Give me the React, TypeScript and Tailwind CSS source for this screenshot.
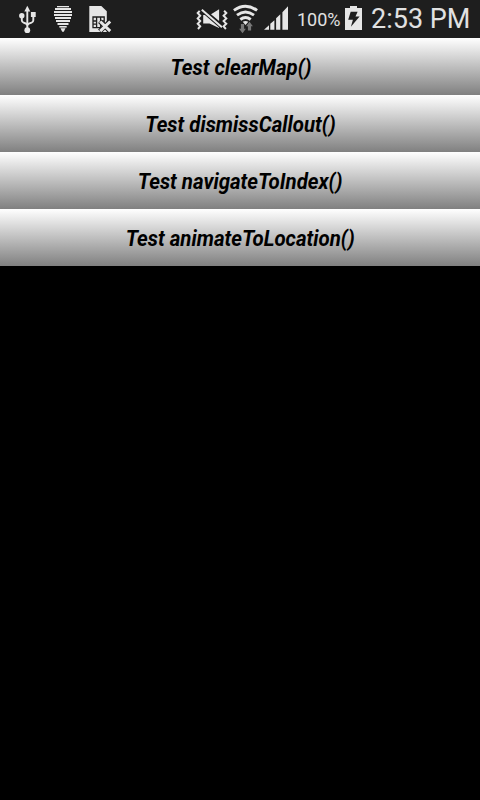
import type { ReactNode } from "react";

const ROBOTO = "font-['Roboto',sans-serif]";

function Glyph({ box, className, children }: { box: string; className: string; children: ReactNode }) {
  return (
    <svg viewBox={box} className={`block h-[38px] shrink-0 ${className}`} fill="#e6e6e6">
      {children}
    </svg>
  );
}

function UsbIcon() {
  return (
    <Glyph box="18 0 20 38" className="w-5">
      <path d="M27.3 5.8l3 5.6h-6z" />
      <circle cx="27.3" cy="30.2" r="2.9" />
      <circle cx="21.8" cy="15.8" r="2.7" />
      <rect x="30.9" y="12" width="4.8" height="5" />
      <path d="M27.3 10v20M21.8 16v4.2q0 1.8 1.8 2.5l2.1 .8q1.6.7 1.6 2.5M33.3 16v4.2q0 1.8-1.8 2.5l-2.6.9q-1.6.7-1.6 2.5" fill="none" stroke="#e6e6e6" strokeWidth="1.9" />
    </Glyph>
  );
}

function StripedPinIcon() {
  return (
    <Glyph box="53 0 20 38" className="w-5">
      <rect x="57" y="6" width="12" height="1.3" />
      <rect x="55" y="8" width="16" height="2" />
      <rect x="54" y="11" width="18" height="2" />
      <rect x="54" y="14" width="18" height="2" />
      <rect x="55" y="17" width="16" height="2" />
      <rect x="56" y="20" width="14" height="2" />
      <rect x="57.5" y="23" width="11" height="2" />
      <rect x="59.3" y="26" width="7.4" height="1.6" />
      <path d="M60.5 28.2h5l-1.7 3.6h-1.6z" />
    </Glyph>
  );
}

function SimIcon() {
  return (
    <Glyph box="88 0 24 38" className="w-6">
      <path d="M89.3 6h12l5.5 5.3V32H89.3z" />
      <path d="M93 17h11.2v10.6H93zM96.6 17v10.6M100.6 17v10.6M93 21h3.6M93 24.2h3.6M100.6 21h3.6" fill="none" stroke="#1e1e1e" strokeWidth="1.3" />
      <path d="M99.8 21.2l10.4 10M110.2 21.2l-10.4 10" stroke="#1e1e1e" strokeWidth="5" />
      <path d="M100.2 21.5l10 9.7M110.2 21.5l-10 9.7" stroke="#e6e6e6" strokeWidth="3" />
    </Glyph>
  );
}

function MuteIcon() {
  return (
    <Glyph box="195 0 34 38" className="w-[34px]">
      <path d="M203.2 15h2.6l13.3 11.4V28l-9.6-4.4h-6.3zM211 14.2l8.1-5V21z" />
      <path d="M201.8 9.8l20.2 17.4" stroke="#1e1e1e" strokeWidth="4" />
      <path d="M201.8 9.8l20.2 17.4" stroke="#e6e6e6" strokeWidth="2" />
      <path d="M199.7 10.8l-2 2.2 2.5 2.7-2.5 2.7 2.5 2.7-2.5 2.7 2.5 2.6-2.2 2.6M224.1 10.8l2.2 2.2-2.7 2.7 2.7 2.7-2.7 2.7 2.7 2.7-2.7 2.6 2.3 2.6" fill="none" stroke="#e6e6e6" strokeWidth="2" />
    </Glyph>
  );
}

function WifiIcon() {
  return (
    <Glyph box="232 0 28 38" className="w-7">
      <g fill="none" stroke="#e6e6e6" strokeWidth="2.9">
        <path d="M233.9 10.4q11.6-8.2 23.2 0" />
        <path d="M237 15.2q8.5-6.4 17 0" />
        <path d="M240.3 19.5q5.2-4 10.4 0" />
      </g>
      <path d="M242.7 21.8q2.8-1.8 5.6 0l-2.8 3.2z" />
      <path d="M249.5 21.7l3.4 4.6h-1.8v4.1h-3.2v-4.1h-1.8zM242.5 33.2l-3.4-4.4h1.8V24h3.2v4.8h1.8z" fill="#777" />
    </Glyph>
  );
}

function SignalIcon() {
  return (
    <Glyph box="263 0 26 38" className="w-[26px]">
      <path d="M264 29.8l5-4.6v4.6zM270.3 23.7l4.1-3.5v9.6h-4.1zM276.1 18.2l4.2-3.9v15.5h-4.2zM282.4 12.2l5.6-6v23.6h-5.6z" />
    </Glyph>
  );
}

function BatteryIcon() {
  return (
    <Glyph box="344 0 19 38" className="w-[19px]">
      <path d="M350 6h7v2h5v22h-17V8h5z" />
      <path d="M350.7 11.8h6.9l-2.1 4.8h4.1l-8.7 10.2 2-7.1h-4.7z" fill="#1e1e1e" />
    </Glyph>
  );
}

function StatusBar() {
  return (
    <header className="flex h-[38px] items-center bg-[#1e1e1e] pl-[18px] text-[#e1e1e1]">
      <div className="flex gap-[15px]">
        <UsbIcon />
        <StripedPinIcon />
        <SimIcon />
      </div>
      <div className="ml-[83px] flex">
        <MuteIcon />
        <div className="ml-[3px] flex gap-[3px]">
          <WifiIcon />
          <SignalIcon />
        </div>
      </div>
      <span className="ml-[8px] w-[47px] pt-[2px] text-[18px] leading-none whitespace-nowrap">100%</span>
      <BatteryIcon />
      <time className="ml-[8px] text-[27px] leading-none whitespace-nowrap">2:53 PM</time>
    </header>
  );
}

const ACTIONS = ["Test clearMap()", "Test dismissCallout()", "Test navigateToIndex()", "Test animateToLocation()"];

export default function App() {
  return (
    <div className={`h-[800px] w-[480px] overflow-hidden bg-black ${ROBOTO}`}>
      <StatusBar />
      <main className="flex flex-col">
        {ACTIONS.map((label) => (
          <button
            key={label}
            type="button"
            className="flex h-[57px] items-center justify-center bg-[linear-gradient(to_bottom,#ffffff,#808080)] pt-px pl-px text-[22px] font-bold text-black italic"
          >
            <span className="inline-block scale-x-[0.929]">{label}</span>
          </button>
        ))}
      </main>
    </div>
  );
}
